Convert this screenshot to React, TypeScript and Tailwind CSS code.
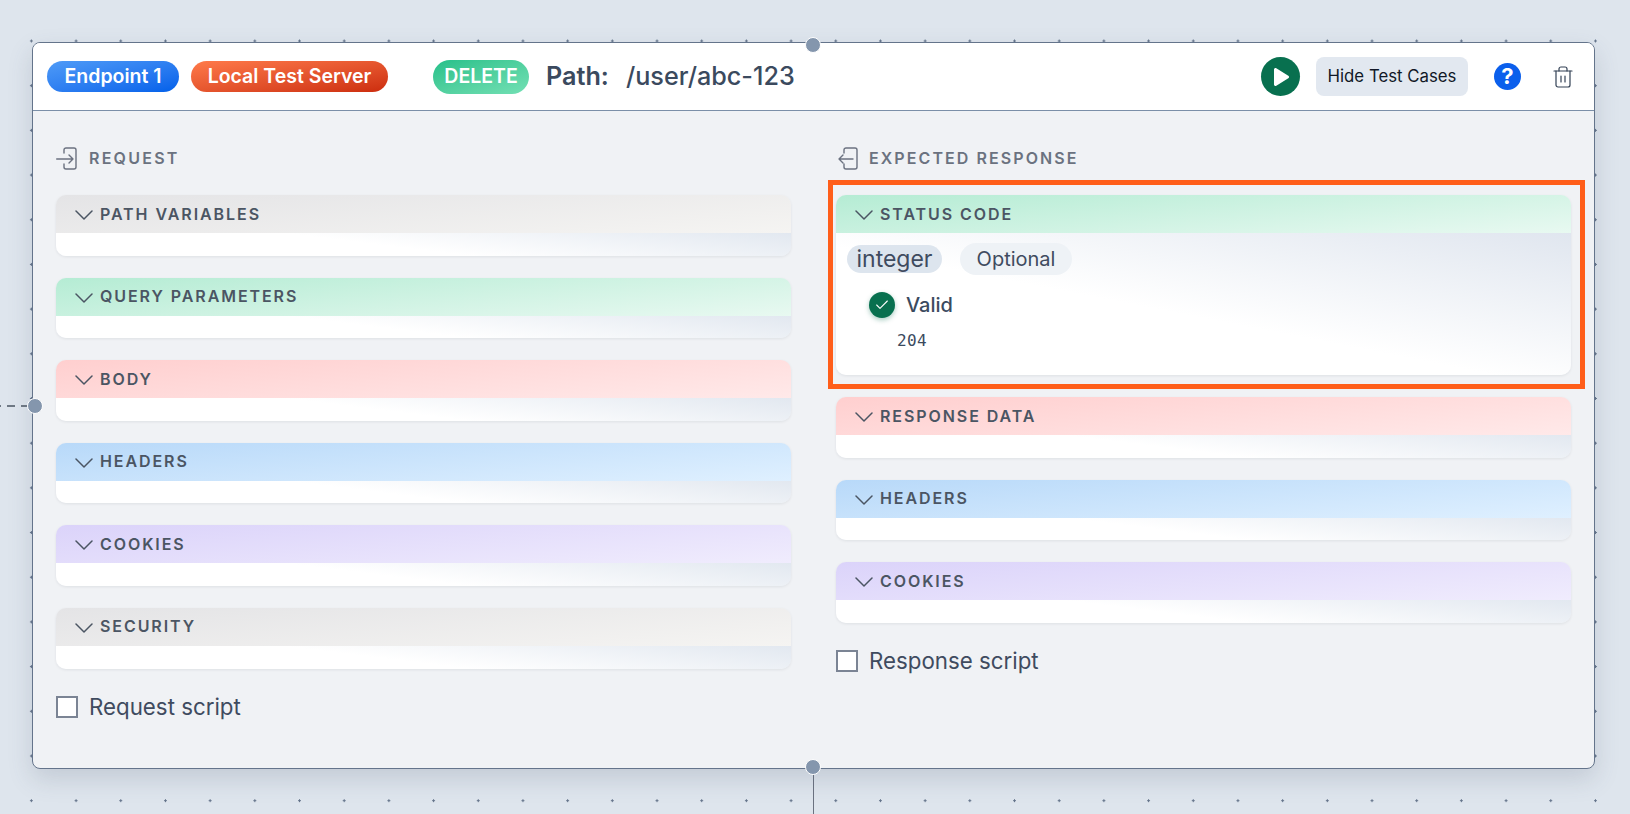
import { Check, Trash2 } from "lucide-react";

const gray = "from-[#e4e4e6] to-[#f5f4f2]";
const green = "from-[#b5ecd4] to-[#e8f9f1]";
const red = "from-[#ffcfcf] to-[#ffe9e9]";
const blue = "from-[#b8d9f9] to-[#dff0ff]";
const purple = "from-[#dbd3fa] to-[#f0ecfd]";

const requestCards = [
  { title: "PATH VARIABLES", color: gray },
  { title: "QUERY PARAMETERS", color: green },
  { title: "BODY", color: red },
  { title: "HEADERS", color: blue },
  { title: "COOKIES", color: purple },
  { title: "SECURITY", color: gray },
];

const responseCards = [
  { title: "RESPONSE DATA", color: red },
  { title: "HEADERS", color: blue },
  { title: "COOKIES", color: purple },
];

function Card({ title, color, children }: { title: string; color: string; children?: React.ReactNode }) {
  return (
    <div className="rounded-[10px] overflow-hidden shadow-[0_1px_3px_rgba(15,23,42,0.08)]">
      <div className={`h-[38px] flex items-center pl-[19px] pb-[1px] bg-linear-[175deg] ${color}`}>
        <svg width="18" height="10" viewBox="0 0 18 10" fill="none" stroke="#4b5563" strokeWidth="1.5" strokeLinecap="round" strokeLinejoin="round" className="mt-[3px]">
          <path d="M1 1l8 8 8-8" />
        </svg>
        <span className="ml-[7px] text-base font-semibold tracking-[0.12em] text-[#4b5563]">{title}</span>
      </div>
      <div className="min-h-[22.6px] bg-linear-[7deg] from-white from-45% to-[#e2e8f0]">{children}</div>
    </div>
  );
}

function ScriptCheck({ label }: { label: string }) {
  return (
    <label className="mt-[27.5px] flex items-center gap-[11px] text-[22.3px] leading-[22px] text-[#3f4b5f]">
      <span className="w-[22px] h-[22px] bg-white border-2 border-[#7b8494]" />
      {label}
    </label>
  );
}

export default function App() {
  return (
    <div className="relative w-full h-screen overflow-hidden font-['Inter',sans-serif] bg-[#dee5ed] bg-[radial-gradient(circle,#64748b_1px,transparent_1.3px)] bg-size-[44.7px_44.7px] bg-position-[9.05px_18.65px]">
      {/* edges going out of the node */}
      <svg width="32" height="4" className="absolute left-0 top-[404px]">
        <line x1="-7" y1="2" x2="32" y2="2" stroke="#4b5563" strokeWidth="1.5" strokeDasharray="8 6" />
      </svg>
      <div className="absolute left-[812.5px] top-[770px] h-[44px] w-px bg-[#6b7280]" />

      <div className="absolute left-[32px] top-[42px] w-[1563px] h-[727px] rounded-[8px] border border-[#64748b] bg-[#f0f2f5] shadow-[0_10px_24px_rgba(71,85,105,0.18)]">
        {/* handles */}
        <span className="absolute left-[772px] -top-[6px] z-10 w-[16px] h-[16px] rounded-full bg-[#8496ad] border border-white" />
        <span className="absolute left-[772px] -bottom-[7px] z-10 w-[16px] h-[16px] rounded-full bg-[#8496ad] border border-white" />
        <span className="absolute -left-[6px] top-[355px] z-10 w-[16px] h-[16px] rounded-full bg-[#8496ad] border border-white" />

        {/* HEADER */}
        <div className="h-[68px] flex items-center bg-white rounded-t-[7px] border-b border-[#7b8fa8] pl-[14px] pr-[19px]">
          <span className="h-[31px] w-[132px] rounded-full flex items-center justify-center bg-linear-to-br from-[#4f9bf7] to-[#0060ea] text-white text-[19.5px] font-semibold">
            Endpoint 1
          </span>
          <span className="ml-[12px] h-[31px] w-[197px] rounded-full flex items-center justify-center bg-linear-to-br from-[#ff7a4a] to-[#cc2c0c] text-white text-[19.5px] font-semibold">
            Local Test Server
          </span>
          <span className="ml-[45px] h-[34px] w-[96px] rounded-full flex items-center justify-center bg-linear-to-br from-[#22c08a] to-[#72e0b4] text-white text-[19.5px] font-semibold">
            DELETE
          </span>
          <span className="ml-[17px] text-[25.2px] font-semibold text-[#3b4a5e]">Path:</span>
          <span className="ml-[17px] text-[25.2px] font-medium text-[#3b4a5e]">/user/abc-123</span>

          <button className="ml-auto w-[39px] h-[39px] rounded-full bg-[#08704f] flex items-center justify-center">
            <svg width="18" height="20" viewBox="0 0 18 20" fill="white">
              <path d="M2 2.5c0-1.2 1.3-1.9 2.3-1.3l12 7.5c1 .6 1 2 0 2.600l-12 7.5c-1 .6-2.300-.1-2.300-1.300z" />
            </svg>
          </button>
          <button className="ml-[16px] w-[152px] h-[39px] rounded-[8px] bg-[#e2e8f0] text-[16.8px] text-[#111827]">Hide Test Cases</button>
          <span className="ml-[26px] w-[27px] h-[27px] rounded-full bg-[#0b5fec] flex items-center justify-center text-white text-[22px] font-bold">?</span>
          <Trash2 size={24} strokeWidth={1.2} className="ml-[30px] text-[#334155]" />
        </div>

        {/* BODY */}
        <div className="grid grid-cols-[735px_735px] gap-x-[45px] px-[23px] pt-[35px]">
          <div>
            <div className="h-[24px] flex items-center gap-[12px] mb-[25px]">
              <svg width="21" height="23" viewBox="0 0 21 23" fill="none" stroke="#6b7280" strokeWidth="1.4" strokeLinecap="round" strokeLinejoin="round">
                <path d="M8 6V3a2 2 0 0 1 2-2h8a2 2 0 0 1 2 2v17a2 2 0 0 1-2 2h-8a2 2 0 0 1-2-2v-3" />
                <path d="M.7 12H17M13 8l4 4-4 4" />
              </svg>
              <span className="text-base font-semibold tracking-[0.14em] text-[#6b7280]">REQUEST</span>
            </div>
            <div className="flex flex-col gap-[22px]">
              {requestCards.map((c, i) => (
                <Card key={i} title={c.title} color={c.color} />
              ))}
            </div>
            <ScriptCheck label="Request script" />
          </div>

          <div>
            <div className="h-[24px] flex items-center gap-[10px] mb-[25px] ml-[2px]">
              <svg width="21" height="23" viewBox="0 0 21 23" fill="none" stroke="#6b7280" strokeWidth="1.4" strokeLinecap="round" strokeLinejoin="round">
                <path d="M6 6V3a2 2 0 0 1 2-2h9a2 2 0 0 1 2 2v17a2 2 0 0 1-2 2H8a2 2 0 0 1-2-2v-3" />
                <path d="M15 12H1M5 8l-4 4 4 4" />
              </svg>
              <span className="text-base font-semibold tracking-[0.13em] text-[#6b7280]">EXPECTED RESPONSE</span>
            </div>
            <div className="flex flex-col gap-[22px]">
              <div className="relative">
                <Card title="STATUS CODE" color={green}>
                  <div className="h-[142px] pl-[11px] pt-[10px] bg-linear-[11deg] from-white from-45% to-[#e0e6ef]">
                    <div className="flex items-center">
                      <span className="h-[28px] w-[95px] rounded-full bg-[#dde5ee] flex items-center justify-center text-[23px] text-[#3f4b5f]">integer</span>
                      <span className="ml-[18px] h-[32px] w-[112px] rounded-full bg-[#eef2f6] flex items-center justify-center text-[20px] text-[#3f4b5f]">Optional</span>
                    </div>
                    <div className="mt-[15px] ml-[22px] flex items-center gap-[11px]">
                      <span className="w-[26px] h-[26px] rounded-full bg-[#08704f] flex items-center justify-center shadow-[0_2px_5px_rgba(8,112,79,0.35)]">
                        <Check size={16} strokeWidth={1.6} className="text-white" />
                      </span>
                      <span className="text-[20px] font-medium text-[#3b4a5e]">Valid</span>
                    </div>
                    <div className="mt-[9px] ml-[50px] font-['DejaVu_Sans_Mono',monospace] text-base tracking-[0.4px] leading-[24px] text-[#3b4a5e]">204</div>
                  </div>
                </Card>
                {/* orange highlight put on top of the screenshot */}
                <div className="absolute -left-[8px] -right-[14px] -top-[15px] -bottom-[14px] border-[5px] border-[#ff5e1a] pointer-events-none" />
              </div>
              {responseCards.map((c, i) => (
                <Card key={i} title={c.title} color={c.color} />
              ))}
            </div>
            <ScriptCheck label="Response script" />
          </div>
        </div>
      </div>
    </div>
  );
}
